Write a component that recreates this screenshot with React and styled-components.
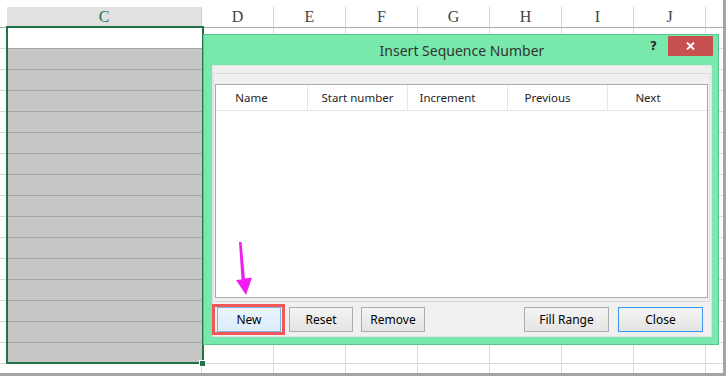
import React from 'react';
import styled, { createGlobalStyle } from 'styled-components';

const GlobalStyle = createGlobalStyle`
  html, body {
    margin: 0;
    padding: 0;
    background: #ffffff;
  }
  body {
    font-family: "Noto Sans", "DejaVu Sans", sans-serif;
  }
`;

const COLUMNS = [
    { key: 'rh', label: '', w: 7 },
    { key: 'C', label: 'C', w: 195 },
    { key: 'D', label: 'D', w: 72 },
    { key: 'E', label: 'E', w: 72 },
    { key: 'F', label: 'F', w: 72 },
    { key: 'G', label: 'G', w: 72 },
    { key: 'H', label: 'H', w: 72 },
    { key: 'I', label: 'I', w: 72 },
    { key: 'J', label: 'J', w: 72 },
    { key: 'K', label: '', w: 40 },
];

const ROW_COUNT = 17;

const LIST_COLUMNS = [
    { label: 'Name', w: 92, shift: true },
    { label: 'Start number', w: 100, shift: false },
    { label: 'Increment', w: 100, shift: true },
    { label: 'Previous', w: 100, shift: true },
    { label: 'Next', w: 100, shift: true, last: true },
];

export default function App() {
    const rows = Array.from({ length: ROW_COUNT }, (_, i) => i);

    return (
        <>
            <GlobalStyle />
            <Frame>
                <Sheet>
                    <HeaderRow>
                        {COLUMNS.map((c) => (
                            <HeaderCell
                                key={c.key}
                                $w={c.w}
                                $active={c.key === 'C'}
                                $edge={c.key === 'rh'}
                            >
                                {c.label}
                            </HeaderCell>
                        ))}
                    </HeaderRow>
                    {rows.map((r) => (
                        <Row key={r}>
                            {COLUMNS.map((c) => (
                                <Cell
                                    key={c.key}
                                    $w={c.w}
                                    $edge={c.key === 'rh'}
                                    $selected={c.key === 'C' && r < 16}
                                    $filled={c.key === 'C' && r > 0 && r < 16}
                                />
                            ))}
                        </Row>
                    ))}
                </Sheet>

                <Selection />
                <FillHandle />

                <Dialog>
                    <TitleBar>
                        <span />
                        <Title>Insert Sequence Number</Title>
                        <Controls>
                            <Help>?</Help>
                            <CloseX>
                                <svg width="9" height="8" viewBox="0 0 9 8">
                                    <path
                                        d="M1 0.5 L8 7.5 M8 0.5 L1 7.5"
                                        stroke="#ffffff"
                                        strokeWidth="1.8"
                                    />
                                </svg>
                            </CloseX>
                        </Controls>
                    </TitleBar>

                    <Panel>
                        <Group>
                            <List>
                                <ListHeader>
                                    {LIST_COLUMNS.map((c) => (
                                        <ListHeaderCell
                                            key={c.label}
                                            $w={c.w}
                                            $shift={c.shift}
                                            $last={c.last}
                                        >
                                            {c.label}
                                        </ListHeaderCell>
                                    ))}
                                </ListHeader>
                            </List>
                        </Group>

                        <ButtonRow>
                            <ButtonGroup>
                                <Highlight>
                                    <Button $w={64} $primary>New</Button>
                                </Highlight>
                                <Button $w={64}>Reset</Button>
                                <Button $w={64}>Remove</Button>
                            </ButtonGroup>
                            <ButtonGroup $right>
                                <Button $w={85}>Fill Range</Button>
                                <Button $w={85} $focused>Close</Button>
                            </ButtonGroup>
                        </ButtonRow>
                    </Panel>
                </Dialog>

                <Arrow width="30" height="62" viewBox="0 0 30 62">
                    <polygon
                        points="9,4 11.5,4 15,40.5 22,39.5 16,57 6,42 11.5,41.5"
                        fill="#f01ef0"
                    />
                </Arrow>
            </Frame>
        </>
    );
}

const Frame = styled.div`
    position: relative;
    width: 726px;
    height: 376px;
    box-sizing: border-box;
    overflow: hidden;
    background: #ffffff;
    border-right: 3px solid #a4a4a4;
    border-bottom: 3px solid #a4a4a4;
`;

const Sheet = styled.div`
    display: flex;
    flex-direction: column;
    padding-top: 7px;
`;

const HeaderRow = styled.div`
    display: flex;
    height: 21px;
`;

const HeaderCell = styled.div`
    flex: 0 0 ${(p) => p.$w}px;
    box-sizing: border-box;
    display: flex;
    align-items: center;
    justify-content: center;
    font-family: "Liberation Serif", "Times New Roman", serif;
    font-size: 16px;
    color: ${(p) => (p.$active ? '#217346' : '#444444')};
    background: ${(p) => (p.$active ? '#e1e1e1' : '#ffffff')};
    border-right: ${(p) => (p.$edge ? 'none' : '1px solid #d4d4d4')};
    border-bottom: 1px solid #ababab;
`;

const Row = styled.div`
    display: flex;
    height: 21px;
`;

const Cell = styled.div`
    flex: 0 0 ${(p) => p.$w}px;
    box-sizing: border-box;
    background: ${(p) => (p.$filled ? '#c6c6c6' : '#ffffff')};
    border-right: ${(p) =>
        p.$edge || p.$selected ? 'none' : '1px solid #d9d9d9'};
    border-bottom: 1px solid
        ${(p) => (p.$selected ? '#a6a6a6' : '#d9d9d9')};
`;

const Selection = styled.div`
    position: absolute;
    left: 6px;
    top: 26px;
    width: 198px;
    height: 338px;
    box-sizing: border-box;
    border: 2px solid #217346;
    pointer-events: none;
`;

const FillHandle = styled.div`
    position: absolute;
    left: 199px;
    top: 360px;
    width: 7px;
    height: 7px;
    box-sizing: border-box;
    background: #217346;
    border: 1px solid #ffffff;
`;

const Dialog = styled.div`
    position: absolute;
    left: 203px;
    top: 34px;
    width: 516px;
    height: 311px;
    box-sizing: border-box;
    display: flex;
    flex-direction: column;
    padding: 0 6px 7px 8px;
    background: #78e8ac;
    border: 1px solid #5cc48f;
`;

const TitleBar = styled.div`
    display: grid;
    grid-template-columns: 1fr auto 1fr;
    align-items: center;
    height: 30px;
    flex: 0 0 30px;
`;

const Title = styled.span`
    font-size: 14px;
    color: #333333;
    white-space: nowrap;
`;

const Controls = styled.div`
    justify-self: end;
    align-self: start;
    display: flex;
    align-items: flex-start;
    margin-right: -1px;
`;

const Help = styled.span`
    margin: 4px 11px 0 0;
    font-family: "DejaVu Sans", sans-serif;
    font-weight: bold;
    font-size: 12px;
    line-height: 14px;
    color: #2b2b2b;
`;

const CloseX = styled.div`
    width: 45px;
    height: 20px;
    margin-top: 1px;
    display: flex;
    align-items: center;
    justify-content: center;
    background: #c75050;
`;

const Panel = styled.div`
    flex: 1;
    display: flex;
    flex-direction: column;
    padding-top: 7px;
    background: #f0f0f0;
    border: 1px solid #e2e2e2;
`;

const Group = styled.div`
    margin-right: 1px;
    padding: 10px 1px 3px 1px;
    border-top: 1px solid #dadada;
    border-left: 1px solid #e4e4e4;
    border-right: 1px solid #e4e4e4;
    border-bottom: 1px solid #dadada;
`;

const List = styled.div`
    height: 214px;
    box-sizing: border-box;
    background: #ffffff;
    border: 1px solid #a9a9a9;
`;

const ListHeader = styled.div`
    display: flex;
    height: 26px;
    box-sizing: border-box;
    border-bottom: 1px solid #e5e5e5;
`;

const ListHeaderCell = styled.div`
    flex: 0 0 ${(p) => p.$w}px;
    box-sizing: border-box;
    display: flex;
    align-items: center;
    justify-content: center;
    padding-right: ${(p) => (p.$shift ? 20 : 0)}px;
    font-size: 11.5px;
    color: #1e1e1e;
    white-space: nowrap;
    border-right: ${(p) => (p.$last ? 'none' : '1px solid #e5e5e5')};
`;

const ButtonRow = styled.div`
    display: flex;
    justify-content: space-between;
    padding: 5px 8px 4px 4px;
`;

const ButtonGroup = styled.div`
    display: flex;
    gap: ${(p) => (p.$right ? 9 : 8)}px;
`;

const Highlight = styled.div`
    position: relative;
    display: flex;

    &::after {
        content: '';
        position: absolute;
        inset: -3px -4px -3px -5px;
        border: 3px solid #f25757;
        pointer-events: none;
    }
`;

const Button = styled.button`
    width: ${(p) => p.$w}px;
    height: 25px;
    margin: 0;
    padding: 0;
    box-sizing: border-box;
    font-family: "Noto Sans", "DejaVu Sans", sans-serif;
    font-size: 12px;
    color: #000000;
    background: ${(p) =>
        p.$primary
            ? 'linear-gradient(#eaf4fc, #dcecfc)'
            : 'linear-gradient(#f4f4f4, #e4e4e4)'};
    border: 1px solid
        ${(p) => (p.$primary ? '#7eb4ea' : p.$focused ? '#3c96f0' : '#adadad')};
`;

const Arrow = styled.svg`
    position: absolute;
    left: 230px;
    top: 238px;
`;
